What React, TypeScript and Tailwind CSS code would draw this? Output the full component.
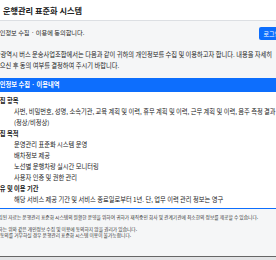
export default function App() {
  const font = "font-['Noto_Sans_CJK_KR','Noto_Sans',sans-serif]";
  return (
    <div className={`w-[276px] h-[260px] overflow-hidden flex flex-col bg-[#f5f6f7] text-[#222] ${font}`}>
      <header className="h-[21px] shrink-0 bg-white border-b border-[#dcdfe3] flex items-center pl-[3px]">
        <h1 className="text-[8.2px] font-bold leading-none text-[#222]">운행관리 표준화 시스템</h1>
      </header>
      <main className="flex-1 ml-[-6px] w-[300px]">
        <div className="flex items-center justify-between pt-[6px] pr-[10px]">
          <span className="text-[6.2px] leading-none">개인정보 수집 · 이용에 동의합니다.</span>
          <button className="h-[13px] px-[4px] text-[6px] leading-none bg-[#0d6efd] text-white rounded-[2px]">로그인</button>
        </div>
        <p className="mt-[8.5px] text-[6.25px] leading-[11px] whitespace-nowrap">
          <span className="block indent-[-5px]">울산광역시 버스 운송사업조합에서는 다음과 같이 귀하의 개인정보를 수집 및 이용하고자 합니다. 내용을 자세히</span>
          <span className="block">읽으신 후 동의 여부를 결정하여 주시기 바랍니다.</span>
        </p>
        <div className="mt-[7px] h-[14px] bg-[#0d6efd] text-white font-bold text-[6.25px] flex items-center">
          개인정보 수집 · 이용내역
        </div>
        <div className="bg-white border-b border-[#0d6efd] pt-[3.5px] pb-[3px] text-[6.25px] leading-[11px] whitespace-nowrap">
          <div className="font-bold">수집 항목</div>
          <div className="pl-[20px]">사번, 비밀번호, 성명, 소속기관, 교육 계획 및 이력, 휴무 계획 및 이력, 근무 계획 및 이력, 음주 측정 결과</div>
          <div className="pl-[20px]">(정상/비정상)</div>
          <div className="font-bold">수집 목적</div>
          <div className="pl-[20px]">운영관리 표준화 시스템 운영</div>
          <div className="pl-[20px]">배차정보 제공</div>
          <div className="pl-[20px]">노선별 운행차량 실시간 모니터링</div>
          <div className="pl-[20px]">사용자 인증 및 권한 관리</div>
          <div className="font-bold">보유 및 이용 기간</div>
          <div className="pl-[20px]">해당 서비스 제공 기간 및 서비스 종료일로부터 1년. 단, 업무 이력 관리 정보는 영구</div>
        </div>
        <div className="text-[4.75px] leading-[6.5px] whitespace-nowrap text-[#333]">
          <p className="mt-[4.5px]">수집된 자료는 운행관리 표준화 시스템의 원활한 운영을 위하여 귀하가 재직중인 회사 및 관계기관에 최소한의 정보를 제공할 수 있습니다.</p>
          <p className="mt-[5.5px]">귀하는 위와 같은 개인정보 수집 및 이용에 동의하지 않을 권리가 있습니다.</p>
          <p className="pl-[6px]">동의를 거부하실 경우 운행관리 표준화 시스템 이용이 불가능합니다.</p>
        </div>
      </main>
      <footer className="h-[4px] shrink-0 border-t border-[#666] bg-[#e2e3e5]" />
    </div>
  );
}
